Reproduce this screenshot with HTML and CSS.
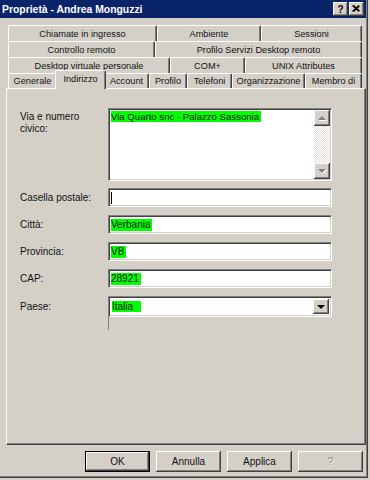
FILE: index.html
```html
<!DOCTYPE html>
<html lang="it">
<head>
    <meta charset="UTF-8">
    <title>Proprietà - Andrea Monguzzi</title>
    <link rel="stylesheet" href="styles.css">
</head>
<body>

<div class="window">
    <div class="titlebar">
        <span class="title">Proprietà - Andrea Monguzzi</span>
        <div class="caption-btns">
            <div class="cap-btn help">?</div>
            <div class="cap-btn">
                <svg width="8" height="7" viewBox="0 0 8 7">
                    <path d="M0.5 0.5 L7 6.5 M1.5 0.5 L7.5 6 M7 0.5 L0.5 6.5 M7.5 1 L1.5 6.5" stroke="#000" stroke-width="1.1" fill="none"/>
                </svg>
            </div>
        </div>
    </div>

    <div class="dialog">
        <div class="tabs">
            <div class="tab-row row-1">
                <div class="tab">Chiamate in ingresso</div>
                <div class="tab">Ambiente</div>
                <div class="tab">Sessioni</div>
            </div>
            <div class="tab-row row-2">
                <div class="tab">Controllo remoto</div>
                <div class="tab">Profilo Servizi Desktop remoto</div>
            </div>
            <div class="tab-row row-3">
                <div class="tab">Desktop virtuale personale</div>
                <div class="tab">COM+</div>
                <div class="tab">UNIX Attributes</div>
            </div>
            <div class="tab-row row-front">
                <div class="tab">Generale</div>
                <div class="tab active">Indirizzo</div>
                <div class="tab">Account</div>
                <div class="tab">Profilo</div>
                <div class="tab">Telefoni</div>
                <div class="tab">Organizzazione</div>
                <div class="tab">Membro di</div>
            </div>
        </div>

        <div class="panel">
            <div class="form-row memo-row">
                <label class="lbl">Via e numero<br>civico:</label>
                <div class="sunken memo">
                    <div class="memo-text"><span class="hl">Via Quarto snc - Palazzo Sassonia</span></div>
                    <div class="vscroll">
                        <div class="sb-btn"><span class="arrow up"></span></div>
                        <div class="sb-track"></div>
                        <div class="sb-btn"><span class="arrow down"></span></div>
                    </div>
                </div>
            </div>

            <div class="form-row">
                <label class="lbl">Casella postale:</label>
                <div class="sunken edit"><span class="caret"></span></div>
            </div>

            <div class="form-row">
                <label class="lbl">Città:</label>
                <div class="sunken edit"><span class="hl">Verbania</span></div>
            </div>

            <div class="form-row">
                <label class="lbl">Provincia:</label>
                <div class="sunken edit"><span class="hl">VB</span></div>
            </div>

            <div class="form-row">
                <label class="lbl">CAP:</label>
                <div class="sunken edit"><span class="hl">28921</span></div>
            </div>

            <div class="form-row select-row">
                <label class="lbl">Paese:</label>
                <div class="sunken combo">
                    <div class="combo-text"><span class="hl">Italia&nbsp;&nbsp;</span></div>
                    <div class="combo-btn"><span class="arrow down dark"></span></div>
                </div>
            </div>

            <div class="form-row stub-row">
                <span></span>
                <div class="stub"></div>
            </div>
        </div>

        <div class="buttons">
            <div class="btn default">OK</div>
            <div class="btn">Annulla</div>
            <div class="btn">Applica</div>
            <div class="btn disabled">?</div>
        </div>
    </div>
</div>

</body>
</html>
```

FILE: styles.css
```css
body {
    margin: 0;
    background-color: #d4d0c8;
    font-family: "Liberation Sans", Arial, sans-serif;
    font-size: 10px;
    color: #111;
}

.window {
    width: 368px;
    height: 478px;
    background-color: #d4d0c8;
    box-shadow: inset -1px -1px #404040, inset -2px -2px #808080;
    display: flex;
    flex-direction: column;
}

/* title bar */

.titlebar {
    height: 18px;
    margin-right: 2px;
    background-color: #0a246a;
    display: flex;
    align-items: center;
    justify-content: space-between;
}

.title {
    padding-left: 2px;
    color: #fff;
    font-weight: bold;
    font-size: 10.4px;
}

.caption-btns {
    display: flex;
    gap: 1px;
    margin-right: 2px;
}

.cap-btn {
    width: 15px;
    height: 14px;
    background-color: #d4d0c8;
    box-shadow: inset -1px -1px #404040, inset 1px 1px #fff, inset -2px -2px #808080;
    display: flex;
    align-items: center;
    justify-content: center;
    font-weight: bold;
    font-size: 10px;
    color: #000;
}

.cap-btn svg {
    margin: 0 1px 1px 0;
}

/* tabs */

.dialog {
    flex: 1;
    padding: 7px 2px 0 6px;
    display: flex;
    flex-direction: column;
}

.tabs {
    margin: 0 2px;
}

.tab-row {
    display: grid;
    height: 16px;
}

.row-1 { grid-template-columns: 149px 104px 101px; }
.row-2 { grid-template-columns: 147px 207px; }
.row-3 { grid-template-columns: 162px 75px 117px; }
.row-front {
    grid-template-columns: 49px 47px 45px 38px 45px 73px 57px;
    height: 15px;
}

.tab {
    border-left: 1px solid #fff;
    border-top: 1px solid #fff;
    border-right: 1px solid #404040;
    border-radius: 2px 2px 0 0;
    box-shadow: inset -1px 0 #808080;
    background-color: #d4d0c8;
    font-size: 9.2px;
    display: flex;
    align-items: center;
    justify-content: center;
    white-space: nowrap;
    overflow: hidden;
}

.tab.active {
    margin: -3px -2px -1px;
    padding-bottom: 3px;
    position: relative;
    z-index: 1;
}

/* page */

.panel {
    height: 357px;
    box-sizing: border-box;
    border-top: 1px solid #fff;
    border-left: 1px solid #fff;
    border-right: 1px solid #404040;
    border-bottom: 1px solid #404040;
    box-shadow: inset -1px -1px #808080;
    padding: 19px 0 0 13px;
}

.form-row {
    display: grid;
    grid-template-columns: 88px 224px;
    align-items: center;
    height: 19px;
    margin-bottom: 8px;
}

.memo-row {
    height: 73px;
    margin-bottom: 7px;
    align-items: start;
}

.memo-row .lbl {
    padding-top: 3px;
    line-height: 12px;
}

.select-row {
    margin-bottom: 1px;
}

.stub-row {
    height: 14px;
}

.sunken {
    box-sizing: border-box;
    height: 100%;
    background-color: #fff;
    border-top: 1px solid #808080;
    border-left: 1px solid #808080;
    border-right: 1px solid #fff;
    border-bottom: 1px solid #fff;
    box-shadow: inset 1px 1px #404040, inset -1px -1px #d4d0c8;
}

.edit {
    padding: 2px 2px;
    display: flex;
    align-items: center;
    line-height: 12px;
}

.hl {
    background-color: #00ff00;
    line-height: 12px;
    padding-right: 2px;
}

.caret {
    width: 1px;
    height: 12px;
    background-color: #000;
}

.memo {
    display: flex;
    padding: 1px;
}

.memo-text {
    flex: 1;
    padding: 1px;
    font-size: 9.6px;
}

.vscroll {
    width: 16px;
    display: flex;
    flex-direction: column;
}

.sb-btn,
.combo-btn {
    width: 16px;
    height: 16px;
    background-color: #d4d0c8;
    box-shadow: inset -1px -1px #404040, inset 1px 1px #fff, inset -2px -2px #808080;
    display: flex;
    align-items: center;
    justify-content: center;
}

.sb-track {
    flex: 1;
    background: repeating-conic-gradient(#e6e3dd 0 25%, #fff 0 50%) 0 0 / 2px 2px;
}

.arrow {
    width: 0;
    height: 0;
    border-left: 4px solid transparent;
    border-right: 4px solid transparent;
}

.arrow.up {
    border-bottom: 4px solid #808080;
    filter: drop-shadow(1px 1px 0 #fff);
}

.arrow.down {
    border-top: 4px solid #808080;
    filter: drop-shadow(1px 1px 0 #fff);
}

.arrow.dark {
    border-top-color: #000;
    filter: none;
}

.combo {
    display: flex;
    align-items: center;
    padding: 2px;
}

.combo-text {
    flex: 1;
    padding-left: 1px;
    line-height: 12px;
}

.combo-btn {
    height: 15px;
}

.stub {
    width: 2px;
    height: 14px;
    box-shadow: inset 1px 0 #808080, inset -1px 0 #d4d0c8;
    background-color: #a0a0a0;
}

/* bottom buttons */

.buttons {
    display: flex;
    justify-content: flex-end;
    gap: 6px;
    margin: 6px 3px 0 0;
}

.btn {
    width: 65px;
    height: 21px;
    box-sizing: border-box;
    background-color: #d4d0c8;
    box-shadow: inset -1px -1px #404040, inset 1px 1px #fff, inset -2px -2px #808080;
    display: flex;
    align-items: center;
    justify-content: center;
}

.btn.default {
    border: 1px solid #000;
}

.btn.disabled {
    color: #808080;
    text-shadow: 1px 1px 0 #fff;
}
```
